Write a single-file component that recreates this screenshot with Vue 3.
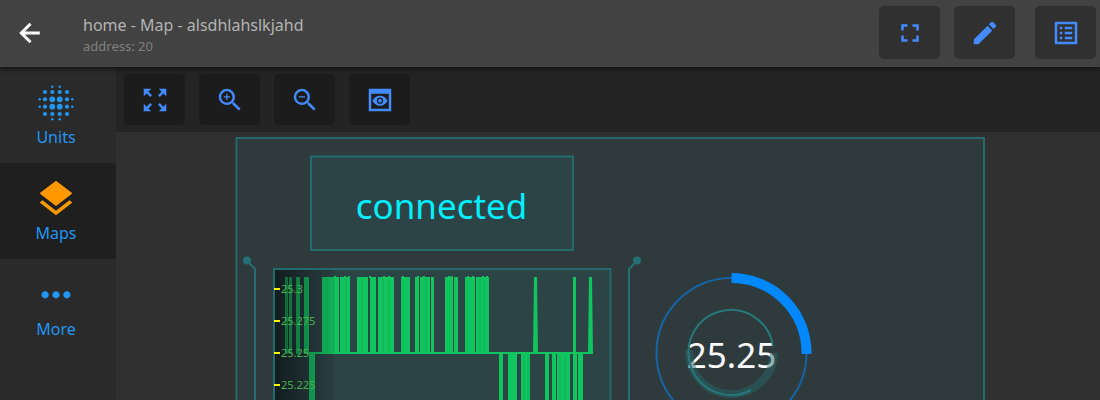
<script setup>
import { ref } from 'vue'

const active = ref('Maps')

// Each burst is [left, right] of a block of rapid samples.
const highs = [
  [285, 288], [289, 292], [296, 300], [304, 309], [322, 339], [340, 350], [357, 368], [370, 376],
  [378, 394], [401, 410], [415, 419], [420, 430], [431, 434], [445, 453], [454, 458], [465, 475],
  [476, 489]
]
const lows = [
  [309, 315], [499, 503], [508, 517], [521, 530], [545, 549], [552, 556], [557, 570], [573, 577], [578, 583]
]
const spikes = [
  { x: 535, base: 5 },
  { x: 574, base: 3 },
  { x: 590, base: 5 }
]
const seams = [327, 334, 346, 362, 383, 389, 426, 480, 484]
const lowSeams = [524, 528, 560, 565]
const bumps = [334, 344, 348, 369, 383, 388, 402, 417, 423, 448, 451, 467, 472, 482, 486]

const ticks = [
  { y: 289, label: '25.3' },
  { y: 321, label: '25.275' },
  { y: 353, label: '25.25' },
  { y: 385, label: '25.225' }
]

const dotGrid = [
  { o: 3.7, p: 3.7, r: 2.9 },
  { o: 3.7, p: 11, r: 2.1 },
  { o: 11, p: 3.7, r: 2.1 },
  { o: 11, p: 11, r: 2.1 },
  { o: 3.7, p: 16.3, r: 1.2 },
  { o: 16.3, p: 3.7, r: 1.2 }
].flatMap((d) => [
  { x: d.o, y: d.p, r: d.r },
  { x: -d.o, y: d.p, r: d.r },
  { x: d.o, y: -d.p, r: d.r },
  { x: -d.o, y: -d.p, r: d.r }
])
</script>

<template>
  <div class="app">
    <header class="bar">
      <button class="back" aria-label="Back">
        <svg width="26" height="26" viewBox="0 0 24 24"><path d="M21 12H4M12.500 3.500L4 12l8.500 8.500" fill="none" stroke="#fff" stroke-width="2.800" /></svg>
      </button>
      <div class="heading">
        <h1>home - Map - alsdhlahslkjahd</h1>
        <p>address: 20</p>
      </div>
      <div class="actions">
        <button class="tile" aria-label="Fullscreen">
          <svg width="30" height="30" viewBox="0 0 24 24"><path d="M7 14H5v5h5v-2H7v-3zm-2-4h2V7h3V5H5v5zm12 7h-3v2h5v-5h-2v3zM14 5v2h3v3h2V5h-5z" /></svg>
        </button>
        <button class="tile" aria-label="Edit">
          <svg width="30" height="30" viewBox="0 0 24 24"><path d="M3 17.250V21h3.750L17.810 9.940l-3.750-3.750L3 17.250zM20.710 7.040a1 1 0 0 0 0-1.410l-2.340-2.340a1 1 0 0 0-1.410 0l-1.830 1.830 3.750 3.750 1.830-1.830z" /></svg>
        </button>
        <button class="tile last" aria-label="List">
          <svg width="30" height="30" viewBox="0 0 24 24"><path d="M19 5v14H5V5h14m1.100-2H3.900c-.5 0-.9.4-.9.9v16.200c0 .4.4.9.9.9h16.200c.4 0 .9-.5.9-.9V3.900c0-.5-.5-.9-.9-.9zM11 7h6v2h-6V7zm0 4h6v2h-6v-2zm0 4h6v2h-6zM7 7h2v2H7zm0 4h2v2H7zm0 4h2v2H7z" /></svg>
        </button>
      </div>
    </header>

    <div class="body">
      <nav class="rail" aria-label="Main">
        <button class="item" :class="{ active: active === 'Units' }" @click="active = 'Units'">
          <svg width="40" height="40" viewBox="-20 -22 40 40"><circle v-for="(d, i) in dotGrid" :key="i" :cx="d.x" :cy="d.y" :r="d.r" /></svg>
          <span>Units</span>
        </button>
        <button class="item" :class="{ active: active === 'Maps' }" @click="active = 'Maps'">
          <svg width="44" height="40" viewBox="0 0 24 22"><path d="M11.990 18.540l-7.370-5.730L3 14.070l9 7 9-7-1.630-1.270-7.380 5.740zM12 16l7.360-5.730L21 9l-9-7-9 7 1.630 1.270L12 16z" /></svg>
          <span>Maps</span>
        </button>
        <button class="item" :class="{ active: active === 'More' }" @click="active = 'More'">
          <svg width="44" height="40" viewBox="0 0 24 22"><path d="M6 10c-1.100 0-2 .9-2 2s.9 2 2 2 2-.9 2-2-.9-2-2-2zm12 0c-1.100 0-2 .9-2 2s.9 2 2 2 2-.9 2-2-.9-2-2-2zm-6 0c-1.100 0-2 .9-2 2s.9 2 2 2 2-.9 2-2-.9-2-2-2z" /></svg>
          <span>More</span>
        </button>
      </nav>

      <main class="main">
        <div class="tools" role="toolbar" aria-label="Map view">
          <button class="tile" aria-label="Fit map">
            <svg width="30" height="30" viewBox="0 0 24 24"><path d="M15 3l2.300 2.300-2.890 2.870 1.420 1.420L18.700 6.700 21 9V3h-6zM3 9l2.300-2.300 2.870 2.890 1.420-1.420L6.700 5.300 9 3H3v6zm6 12l-2.300-2.300 2.890-2.870-1.420-1.420L5.300 17.300 3 15v6h6zm12-6l-2.300 2.300-2.870-2.890-1.420 1.420 2.890 2.870L15 21h6v-6z" /></svg>
          </button>
          <button class="tile" aria-label="Zoom in">
            <svg width="30" height="30" viewBox="0 0 24 24"><path d="M15.500 14h-.79l-.28-.27A6.471 6.471 0 0 0 16 9.500 6.500 6.500 0 1 0 9.500 16c1.610 0 3.090-.59 4.230-1.570l.27.28v.79l5 4.990L20.490 19l-4.990-5zm-6 0C7.010 14 5 11.990 5 9.500S7.010 5 9.500 5 14 7.010 14 9.500 11.990 14 9.500 14zM12 9h-2V7H9v2H7v1h2v2h1v-2h2z" /></svg>
          </button>
          <button class="tile" aria-label="Zoom out">
            <svg width="30" height="30" viewBox="0 0 24 24"><path d="M15.500 14h-.79l-.28-.27A6.471 6.471 0 0 0 16 9.500 6.500 6.500 0 1 0 9.500 16c1.610 0 3.090-.59 4.230-1.570l.27.28v.79l5 4.990L20.490 19l-4.990-5zm-6 0C7.010 14 5 11.990 5 9.500S7.010 5 9.500 5 14 7.010 14 9.500 11.990 14 9.500 14zM7 9h5v1H7z" /></svg>
          </button>
          <button class="tile" aria-label="Preview">
            <svg width="30" height="30" viewBox="0 0 24 24"><path fill-rule="evenodd" d="M3 3h18v18H3zM5 7v12h14V7zM12 8.500c-2.730 0-5.060 1.660-6 4 .94 2.340 3.270 4 6 4s5.060-1.660 6-4c-.94-2.340-3.270-4-6-4zm0 6.500a2.500 2.500 0 1 1 0-5 2.500 2.500 0 0 1 0 5zm0-1a1.500 1.500 0 1 0 0-3 1.500 1.500 0 0 0 0 3z" /></svg>
          </button>
        </div>

        <div class="canvas">
          <svg class="map" width="752" height="268" viewBox="234 132 752 268" role="img" aria-label="Map">
            <defs>
              <linearGradient id="fade" x1="0" x2="1" y1="0" y2="0">
                <stop offset="0" stop-color="#0d1517" stop-opacity="0.6" />
                <stop offset="1" stop-color="#172326" stop-opacity="0.1" />
              </linearGradient>
            </defs>
            <rect class="panel" x="236.500" y="138" width="747.500" height="420" />
            <rect class="box" x="311" y="156.500" width="262" height="93.500" />
            <text class="status" x="441.500" y="219" text-anchor="middle">connected</text>

            <path class="wire" d="M247 261l8 8v140M637 261l-8 8v140" />
            <circle class="node" cx="247" cy="260.500" r="4" />
            <circle class="node" cx="637" cy="260.500" r="4" />

            <rect class="box" x="274" y="269" width="336.500" height="160" />
            <rect x="275" y="270" width="59" height="130" fill="url(#fade)" />
            <g class="trace">
              <rect v-for="h in highs" :key="h[0]" :x="h[0]" y="277" :width="h[1] - h[0]" height="77" />
              <rect v-for="l in lows" :key="l[0]" :x="l[0]" y="353" :width="l[1] - l[0]" height="60" />
              <path v-for="s in spikes" :key="s.x" :d="`M${s.x - 1} 277h3l${(s.base - 3) / 2} 77h-${s.base}z`" />
              <rect v-for="b in bumps" :key="b" :x="b" y="276" width="2" height="2" />
              <rect x="309" y="352" width="284" height="2" />
            </g>
            <path v-for="s in seams" :key="s" class="seam" :d="`M${s} 278v74`" />
            <path v-for="s in lowSeams" :key="s" class="seam" :d="`M${s} 355v50`" />
            <rect x="275" y="270" width="59" height="130" fill="url(#fade)" />
            <g v-for="t in ticks" :key="t.y">
              <rect x="274" :y="t.y - 1" width="6" height="2" fill="#ff0" />
              <text class="tick" x="281" :y="t.y + 4">{{ t.label }}</text>
            </g>

            <circle class="ring" cx="731.500" cy="353" r="75" />
            <text class="value" x="731.500" y="368" text-anchor="middle">25.25</text>
            <path class="shade" d="M689 350A42.500 42.500 0 0 0 774 353" />
            <path class="dial" d="M773 346A42.500 42.500 0 1 0 751 390" />
            <path class="arc" d="M731.500 278A75 75 0 0 1 806.500 354" />
          </svg>
        </div>
      </main>
    </div>
  </div>
</template>

<style>
body { background: #303030; overflow: hidden; }
</style>

<style scoped>
.app {
  height: 100vh;
  display: flex;
  flex-direction: column;
  overflow: hidden;
  background: #303030;
  font-family: "Noto Sans", "Open Sans", sans-serif;
}
button { border: 0; padding: 0; background: none; font: inherit; cursor: pointer; }
svg { display: block; }
.bar {
  position: relative;
  z-index: 1;
  flex: none;
  display: flex;
  align-items: center;
  height: 67px;
  box-sizing: border-box;
  padding: 0 4px 2px 17px;
  background: #424242;
  box-shadow: 0 1px 6px rgba(0, 0, 0, 0.7);
}
.heading { margin-left: 40px; padding-top: 4px; flex: 1; }
h1 { margin: 0; font-size: 16px; line-height: 22px; font-weight: 400; color: #b3b3b3; }
p { margin: 0; font-size: 13px; line-height: 20px; color: #808080; }
.actions { display: flex; gap: 14px; }
.tile {
  width: 61px;
  height: 53px;
  border-radius: 5px;
  display: flex;
  align-items: center;
  justify-content: center;
  background: #303030;
  fill: #448aff;
}
.last { margin-left: 6px; }
.body { flex: 1; display: flex; min-height: 0; }
.rail { flex: none; width: 116px; background: #2a2a2a; }
.item {
  width: 100%;
  height: 96px;
  padding-right: 4px;
  display: flex;
  flex-direction: column;
  align-items: center;
  justify-content: center;
  gap: 4px;
  border-radius: 0 4px 4px 0;
  color: #2196f3;
  fill: #2196f3;
  font-size: 16px;
  line-height: 24px;
}
.active { background: #1f1f1f; fill: #ff9800; }
.main { flex: 1; min-width: 0; display: flex; flex-direction: column; }
.tools {
  flex: none;
  display: flex;
  gap: 14px;
  padding: 7px 8px;
  background: #242424;
}
.tools .tile { height: 51px; background: #1c1c1c; }
.canvas { flex: 1; min-height: 0; overflow: hidden; display: flex; justify-content: center; padding-left: 4px; }
.map { flex: none; }
.panel { fill: #2f3a3c; stroke: #24696c; stroke-width: 2; }
.box { fill: #2d4447; stroke: #24696c; stroke-width: 2; }
.status { font-size: 35px; fill: #00f0ff; }
.wire { fill: none; stroke: #246e75; stroke-width: 2; }
.node { fill: #246e75; }
.trace { fill: #10c45e; }
.seam { stroke: #0fae58; stroke-width: 1; }
.tick { font-size: 11px; fill: #4caf50; }
.ring { fill: none; stroke: #1763a6; stroke-width: 2; }
.value { font-size: 35px; fill: #fff; }
.shade { fill: none; stroke: #28666a; stroke-opacity: 0.5; stroke-width: 8; }
.dial { fill: none; stroke: #28777a; stroke-width: 2; }
.arc { fill: none; stroke: #0088ff; stroke-width: 10; }
</style>
